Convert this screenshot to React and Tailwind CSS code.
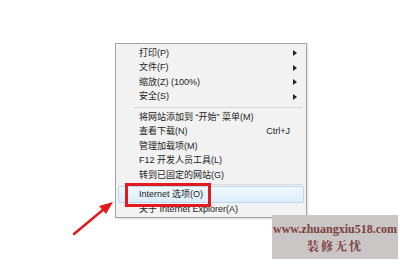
// Win7 IE tools menu with red annotation
const font = { fontFamily: '"Liberation Sans", "Noto Sans CJK SC", sans-serif' };

const SubArrow = () => (
    <svg width="4" height="6" viewBox="0 0 4 6" className="ml-auto">
        <path d="M0 0 L4 3 L0 6 Z" fill="#222" />
    </svg>
);

const Row = ({ label, shortcut, sub, active }) => (
    <div
        className={
            active
                ? 'flex items-center h-[17px] pl-[20px] pr-[6px] rounded-[2px] border border-[#b9d7ef] bg-gradient-to-b from-[#f1f8fe] to-[#dcedfb]'
                : 'flex items-center h-[14.5px] pl-[21px] pr-[7px]'
        }
    >
        <span className="text-[9px] leading-none text-[#222]">{label}</span>
        {shortcut && <span className="ml-auto mr-[7px] text-[9px] leading-none text-[#222]">{shortcut}</span>}
        {sub && <SubArrow />}
    </div>
);

export default function App() {
    return (
        <div className="relative w-[400px] h-[266px] bg-white overflow-hidden" style={font}>
            <div className="pl-[115px] pt-[43px]">
                <div className="w-[192px] h-[175px] border border-[#a3a3a3] bg-[#f2f2f2] px-[2px] pt-[2px] shadow-[1px_1px_2px_rgba(0,0,0,0.15)]">
                    <Row label="打印(P)" sub />
                    <Row label="文件(F)" sub />
                    <Row label="缩放(Z) (100%)" sub />
                    <Row label="安全(S)" sub />
                    <div className="flex items-center h-[6px]">
                        <div className="ml-[16px] mr-[1px] flex-1 border-t border-[#d9d9d9]" />
                    </div>
                    <Row label="将网站添加到 “开始” 菜单(M)" />
                    <Row label="查看下载(N)" shortcut="Ctrl+J" />
                    <Row label="管理加载项(M)" />
                    <Row label="F12 开发人员工具(L)" />
                    <Row label="转到已固定的网站(G)" />
                    <div className="flex items-center h-[3px]">
                        <div className="ml-[16px] mr-[1px] flex-1 border-t border-[#d9d9d9]" />
                    </div>
                    <Row label="Internet 选项(O)" active />
                    <Row label="关于 Internet Explorer(A)" />
                </div>
            </div>

            {/* red highlight box */}
            <div className="absolute left-[125px] top-[183px] w-[86px] h-[24px] border-[3px] border-[#e3191e]" />

            {/* red arrow */}
            <svg className="absolute left-0 top-0" width="400" height="266" viewBox="0 0 400 266">
                <line x1="74" y1="234" x2="104" y2="209" stroke="#e3191e" strokeWidth="2.5" strokeLinecap="round" />
                <path d="M113 202 L99 206 L106 214 Z" fill="#e3191e" />
            </svg>

            {/* watermark */}
            <div className="absolute left-[272px] top-[215px] w-[126px] h-[44px] bg-[#cbc6c6] flex flex-col items-center justify-center gap-[5px]">
                <span className="text-[12px] leading-none font-bold text-[#7c3f3f]" style={{ fontFamily: '"Liberation Serif", serif' }}>
                    www.zhuangxiu518.com
                </span>
                <span className="text-[12px] leading-none font-bold tracking-[2px] text-[#7c3f3f]" style={{ fontFamily: '"Noto Serif CJK SC", "Noto Sans CJK SC", serif' }}>
                    装修无忧
                </span>
            </div>
        </div>
    );
}
